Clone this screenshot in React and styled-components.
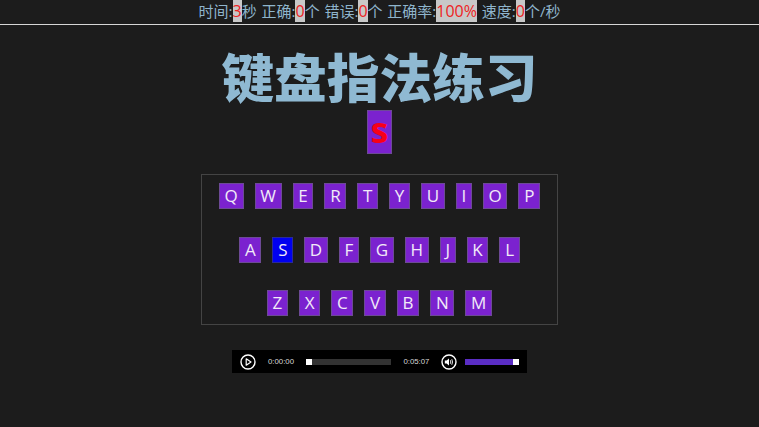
import React from "react";
import styled, { createGlobalStyle } from "styled-components";

const GlobalStyle = createGlobalStyle`
  html, body {
    margin: 0;
    padding: 0;
    background: #1c1c1c;
  }
  body {
    font-family: "Open Sans", "Noto Sans CJK SC", sans-serif;
  }
`;

const rows = ["QWERTYUIOP", "ASDFGHJKL", "ZXCVBNM"];
const pressed = "S";

const stats = [
  { label: "时间:", value: "3", unit: "秒" },
  { label: "正确:", value: "0", unit: "个" },
  { label: "错误:", value: "0", unit: "个" },
  { label: "正确率:", value: "100%", unit: "" },
  { label: "速度:", value: "0", unit: "个/秒" },
];

export default function App() {
  return (
    <Page>
      <GlobalStyle />
      <Header>
        {stats.map(({ label, value, unit }) => (
          <Stat key={label}>
            {label}
            <Value>{value}</Value>
            {unit}
          </Stat>
        ))}
      </Header>
      <Title>键盘指法练习</Title>
      <Target>s</Target>
      <Board>
        {rows.map((row) => (
          <KeyRow key={row}>
            {row.split("").map((letter) => (
              <Key key={letter} $active={letter === pressed}>
                {letter}
              </Key>
            ))}
          </KeyRow>
        ))}
      </Board>
      <Player>
        <RoundButton viewBox="0 0 16 16">
          <circle cx="8" cy="8" r="7" fill="none" stroke="#fff" strokeWidth="1.4" />
          <path d="M6.2 4.8 L11 8 L6.2 11.2 Z" fill="none" stroke="#fff" strokeWidth="1.2" strokeLinejoin="round" />
        </RoundButton>
        <Time>0:00:00</Time>
        <Seek>
          <Thumb />
        </Seek>
        <Time>0:05:07</Time>
        <RoundButton viewBox="0 0 16 16">
          <circle cx="8" cy="8" r="7" fill="none" stroke="#fff" strokeWidth="1.4" />
          <path d="M3.8 6.6 H5.6 L8 4.6 V11.4 L5.6 9.4 H3.8 Z" fill="#fff" />
          <path d="M9.3 6.2 Q10.3 8 9.3 9.8 M10.8 5.2 Q12.3 8 10.8 10.8" fill="none" stroke="#fff" strokeWidth="0.9" />
        </RoundButton>
        <Volume>
          <Thumb />
        </Volume>
      </Player>
    </Page>
  );
}

const Page = styled.div`
  width: 759px;
  height: 427px;
  overflow: hidden;
  background: #1c1c1c;
  display: flex;
  flex-direction: column;
  align-items: center;
`;

const Header = styled.div`
  width: 100%;
  height: 24px;
  border-bottom: 1px solid #d6d6d6;
  display: flex;
  justify-content: center;
  align-items: flex-start;
  gap: 4.8px;
  color: #8fb5cc;
  font-size: 15px;
  line-height: 22px;
  font-family: "Open Sans", "Noto Sans CJK SC", sans-serif;
`;

const Stat = styled.span`
  white-space: nowrap;
`;

const Value = styled.span`
  background: #c8c8c8;
  color: #ee2222;
  font-size: 16px;
`;

const Title = styled.h1`
  margin: 18px 0 0;
  height: 66px;
  font-family: "Noto Sans CJK SC", sans-serif;
  font-size: 52.7px;
  line-height: 64px;
  font-weight: 900;
  color: #8fb9d2;
`;

const Target = styled.div`
  margin-top: 1px;
  width: 25px;
  height: 44px;
  box-sizing: border-box;
  background: #7b22cf;
  border: 1px solid #6d4a96;
  color: #f80018;
  font-size: 36px;
  font-weight: 700;
  line-height: 38px;
  text-align: center;
`;

const Board = styled.div`
  margin-top: 20px;
  width: 357px;
  height: 151px;
  box-sizing: border-box;
  border: 1px solid #444;
  padding: 8px 0;
  display: flex;
  flex-direction: column;
  justify-content: space-between;
`;

const KeyRow = styled.div`
  display: flex;
  justify-content: center;
  gap: 11px;
`;

const Key = styled.span`
  box-sizing: border-box;
  height: 26px;
  padding: 0 4.7px;
  background: ${(p) => (p.$active ? "#0000f0" : "#7b22cf")};
  border: 1px solid ${(p) => (p.$active ? "#2a2a9a" : "#6d4a96")};
  color: #f2eaf8;
  font-size: 17px;
  line-height: 24px;
  text-align: center;
`;

const Player = styled.div`
  margin-top: 25px;
  width: 295px;
  height: 23px;
  box-sizing: border-box;
  background: #000;
  padding: 0 8px;
  display: flex;
  align-items: center;
`;

const RoundButton = styled.svg`
  width: 16px;
  height: 16px;
  flex: none;
`;

const Time = styled.span`
  margin: 0 12px;
  width: 26px;
  color: #d8d8d8;
  font-size: 7.8px;
  font-family: "Liberation Sans", sans-serif;
  white-space: nowrap;
`;

const Seek = styled.div`
  width: 86px;
  height: 6px;
  background: #333;
`;

const Volume = styled.div`
  margin-left: 8px;
  width: 54px;
  height: 6px;
  background: #5a2dc4;
  display: flex;
  justify-content: flex-end;
`;

const Thumb = styled.div`
  width: 6px;
  height: 6px;
  background: #fff;
`;
